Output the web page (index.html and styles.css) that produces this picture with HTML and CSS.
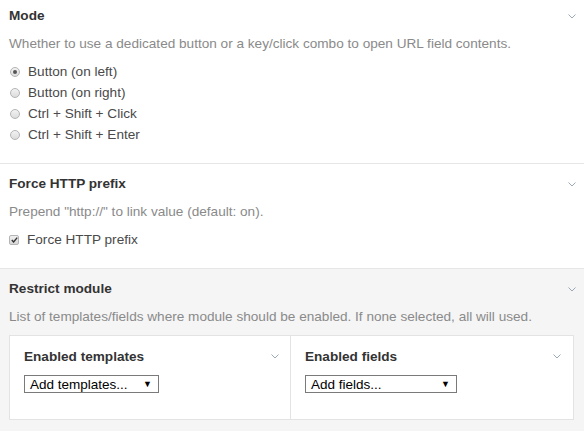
FILE: index.html
```html
<!DOCTYPE html>
<html>
<head>
<meta charset="utf-8">
<link rel="stylesheet" href="styles.css">
</head>
<body>
<div class="page">
  <section class="section section--first">
    <div class="head">
      <h2 class="title">Mode</h2>
      <span class="chev"><svg width="8" height="5" viewBox="0 0 8 5"><path d="M0.5 0.5 L4 4 L7.5 0.5" fill="none" stroke="#9aa8b8" stroke-width="1"/></svg></span>
    </div>
    <p class="desc">Whether to use a dedicated button or a key/click combo to open URL field contents.</p>
    <ul class="options">
      <li class="opt"><span class="radio radio--on"></span>Button (on left)</li>
      <li class="opt"><span class="radio"></span>Button (on right)</li>
      <li class="opt"><span class="radio"></span>Ctrl + Shift + Click</li>
      <li class="opt"><span class="radio"></span>Ctrl + Shift + Enter</li>
    </ul>
  </section>
  <section class="section">
    <div class="head">
      <h2 class="title">Force HTTP prefix</h2>
      <span class="chev"><svg width="8" height="5" viewBox="0 0 8 5"><path d="M0.5 0.5 L4 4 L7.5 0.5" fill="none" stroke="#9aa8b8" stroke-width="1"/></svg></span>
    </div>
    <p class="desc">Prepend "http://" to link value (default: on).</p>
    <ul class="options">
      <li class="opt"><span class="check"><svg width="7" height="6" viewBox="0 0 7 6"><path d="M0.8 3 L2.6 5 L6.2 0.6" fill="none" stroke="#333" stroke-width="1.4"/></svg></span>Force HTTP prefix</li>
    </ul>
  </section>
  <section class="section section--gray">
    <div class="head">
      <h2 class="title">Restrict module</h2>
      <span class="chev"><svg width="8" height="5" viewBox="0 0 8 5"><path d="M0.5 0.5 L4 4 L7.5 0.5" fill="none" stroke="#9aa8b8" stroke-width="1"/></svg></span>
    </div>
    <p class="desc">List of templates/fields where module should be enabled. If none selected, all will used.</p>
    <div class="box">
      <div class="col">
        <div class="head head--col">
          <h3 class="title">Enabled templates</h3>
          <span class="chev"><svg width="8" height="5" viewBox="0 0 8 5"><path d="M0.5 0.5 L4 4 L7.5 0.5" fill="none" stroke="#9aa8b8" stroke-width="1"/></svg></span>
        </div>
        <div class="select select--tpl"><span>Add templates...</span><span class="arrow">▼</span></div>
      </div>
      <div class="col col--right">
        <div class="head head--col">
          <h3 class="title">Enabled fields</h3>
          <span class="chev"><svg width="8" height="5" viewBox="0 0 8 5"><path d="M0.5 0.5 L4 4 L7.5 0.5" fill="none" stroke="#9aa8b8" stroke-width="1"/></svg></span>
        </div>
        <div class="select select--fld"><span>Add fields...</span><span class="arrow">▼</span></div>
      </div>
    </div>
  </section>
</div>
</body>
</html>
```
FILE: styles.css
```css
* { box-sizing: border-box; }
html, body { margin: 0; padding: 0; background: #fff; }
body {
  font-family: "Liberation Sans", Arial, sans-serif;
  font-size: 13.6px;
  color: #555;
  width: 584px;
  height: 431px;
  overflow: hidden;
}
.section {
  padding: 10px 8px 18px 9px;
  border-bottom: 1px solid #e6e6e6;
}
.section--first { padding-top: 6px; }
.section--gray {
  background: #f5f5f5;
  border-bottom: none;
  padding-bottom: 12px;
}
.head {
  display: flex;
  justify-content: space-between;
  align-items: center;
  height: 20px;
}
.title {
  margin: 0;
  font-size: 13.6px;
  font-weight: bold;
  color: #333;
  line-height: 20px;
}
.chev {
  display: flex;
  width: 8px;
  height: 5px;
}
.desc {
  margin: 8px 0 0;
  line-height: 20px;
  color: #8a8a8a;
}
.options {
  list-style: none;
  margin: 7px 0 0;
  padding: 0;
}
.opt {
  display: flex;
  align-items: center;
  height: 21px;
  color: #4a4a4a;
}
.radio {
  width: 10px;
  height: 10px;
  border-radius: 50%;
  border: 1px solid #b4b4b4;
  background: linear-gradient(#f2f2f2, #dcdcdc);
  margin: 0 8px 0 1px;
  display: flex;
  align-items: center;
  justify-content: center;
}
.radio--on::after {
  content: "";
  width: 4px;
  height: 4px;
  border-radius: 50%;
  background: #555;
}
.check {
  width: 10px;
  height: 10px;
  border: 1px solid #b4b4b4;
  border-radius: 2px;
  background: linear-gradient(#f0f0f0, #d8d8d8);
  margin: 0 8px 0 0;
  display: flex;
  align-items: center;
  justify-content: center;
}
.box {
  margin-top: 8px;
  display: flex;
  background: #fff;
  border: 1px solid #e3e3e3;
  width: 565px;
  height: 85px;
}
.col {
  flex: 0 0 281px;
  padding: 10px 11px 0 14px;
  border-right: 1px solid #e3e3e3;
}
.col--right {
  flex: 1;
  border-right: none;
  padding-right: 12px;
}
.head--col { height: 21px; }
.select {
  margin-top: 8px;
  display: flex;
  justify-content: space-between;
  align-items: center;
  height: 18px;
  border: 1px solid #7a7a7a;
  background: #fff;
  color: #000;
  font-size: 13.5px;
  padding: 0 6px 0 5px;
}
.select--tpl { width: 135px; }
.select--fld { width: 152px; }
.arrow { font-size: 9px; color: #000; }
```
